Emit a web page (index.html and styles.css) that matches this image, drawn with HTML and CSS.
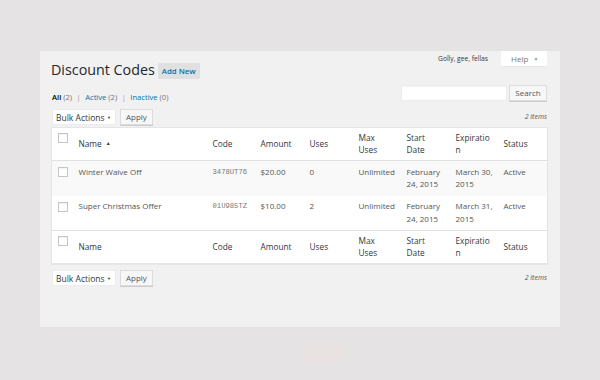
FILE: index.html
```html
<!DOCTYPE html>
<html>
<head>
<meta charset="utf-8">
<link rel="stylesheet" href="styles.css">
</head>
<body>
<div class="frame">
  <div class="top">
    <div class="title-row">
      <h1 class="title">Discount Codes</h1>
      <span class="add-new">Add New</span>
    </div>
    <div class="meta">
      <span class="golly">Golly, gee, fellas</span>
      <span class="help">Help <span class="caret">▼</span></span>
    </div>
  </div>
  <div class="filter-row">
    <div class="subsubsub">
      <span class="current">All</span> <span class="count">(2)</span> <span class="sep">|</span>
      <span class="link">Active</span> <span class="count">(2)</span> <span class="sep">|</span>
      <span class="link">Inactive</span> <span class="count">(0)</span>
    </div>
    <div class="search">
      <span class="search-input"></span>
      <span class="btn search-btn">Search</span>
    </div>
  </div>
  <div class="tablenav">
    <div class="actions">
      <span class="select">Bulk Actions <span class="sel-caret">▼</span></span>
      <span class="btn">Apply</span>
    </div>
    <span class="items">2 items</span>
  </div>
  <table class="list">
    <colgroup>
      <col class="c-cb"><col class="c-name"><col class="c-code"><col class="c-amt"><col class="c-uses"><col class="c-max"><col class="c-start"><col class="c-exp"><col class="c-status">
    </colgroup>
    <thead>
      <tr>
        <th class="cb"><span class="check"></span></th>
        <th>Name <span class="sort">▲</span></th>
        <th>Code</th>
        <th>Amount</th>
        <th>Uses</th>
        <th>Max Uses</th>
        <th>Start Date</th>
        <th>Expiration</th>
        <th>Status</th>
      </tr>
    </thead>
    <tbody>
      <tr class="alt">
        <td class="cb"><span class="check"></span></td>
        <td>Winter Waive Off</td>
        <td class="code">3478UT76</td>
        <td>$20.00</td>
        <td>0</td>
        <td>Unlimited</td>
        <td>February 24, 2015</td>
        <td>March 30, 2015</td>
        <td>Active</td>
      </tr>
      <tr>
        <td class="cb"><span class="check"></span></td>
        <td>Super Christmas Offer</td>
        <td class="code">01U985TZ</td>
        <td>$10.00</td>
        <td>2</td>
        <td>Unlimited</td>
        <td>February 24, 2015</td>
        <td>March 31, 2015</td>
        <td>Active</td>
      </tr>
    </tbody>
    <tfoot>
      <tr>
        <th class="cb"><span class="check"></span></th>
        <th>Name</th>
        <th>Code</th>
        <th>Amount</th>
        <th>Uses</th>
        <th>Max Uses</th>
        <th>Start Date</th>
        <th>Expiration</th>
        <th>Status</th>
      </tr>
    </tfoot>
  </table>
  <div class="tablenav bottom">
    <div class="actions">
      <span class="select">Bulk Actions <span class="sel-caret">▼</span></span>
      <span class="btn">Apply</span>
    </div>
    <span class="items">2 items</span>
  </div>
</div>
<div class="ghost-row"><span class="ghost"></span></div>
</body>
</html>
```

FILE: styles.css
```css
html, body {
  margin: 0;
  padding: 0;
}
body {
  background: #e5e3e3;
  font-family: "Open Sans", "Noto Sans", sans-serif;
  color: #555;
  width: 600px;
  height: 380px;
  overflow: hidden;
}
.frame {
  margin: 51px 40px 0;
  height: 276px;
  background: #f1f1f1;
  padding: 0 13px 0 11px;
  box-sizing: border-box;
}
.top {
  display: flex;
  justify-content: space-between;
  align-items: flex-start;
}
.title-row {
  display: flex;
  align-items: center;
  margin-top: 12px;
  height: 16px;
  gap: 3px;
}
.title {
  margin: 0;
  font-size: 14.3px;
  font-weight: 400;
  color: #23282d;
  line-height: 16px;
  position: relative;
  top: -1px;
}
.add-new {
  background: #e0e0e0;
  color: #0073aa;
  font-weight: 600;
  font-size: 7.8px;
  height: 16px;
  line-height: 16px;
  padding: 0 4px;
  border-radius: 1px;
}
.meta {
  display: flex;
  align-items: center;
  height: 15px;
  gap: 13px;
}
.golly {
  font-size: 6.7px;
  color: #32373c;
}
.help {
  background: #fff;
  width: 46px;
  height: 15px;
  line-height: 15px;
  font-size: 8px;
  color: #72777c;
  box-sizing: border-box;
  padding-left: 10px;
  box-shadow: 0 1px 1px rgba(0,0,0,0.04);
}
.caret {
  font-size: 5px;
  margin-left: 3px;
  vertical-align: 1px;
  color: #999;
}
.filter-row {
  display: flex;
  justify-content: space-between;
  align-items: flex-start;
  margin-top: 6px;
}
.subsubsub {
  margin-top: 6px;
  font-size: 7.6px;
  line-height: 12px;
  color: #666;
  padding-left: 1px;
}
.subsubsub .current {
  color: #000;
  font-weight: 600;
}
.subsubsub .count {
  color: #72777c;
}
.subsubsub .sep {
  color: #999;
  margin: 0 2.5px;
}
.subsubsub .link {
  color: #0073aa;
}
.search {
  display: flex;
  gap: 2px;
}
.search-input {
  width: 106px;
  height: 16px;
  background: #fff;
  box-shadow: inset 0 1px 1px rgba(0,0,0,0.05);
  border: 1px solid #ececec;
  box-sizing: border-box;
}
.btn {
  display: inline-block;
  height: 16px;
  line-height: 14px;
  font-size: 8px;
  color: #555;
  background: #f7f7f7;
  border: 1px solid #dcdcdc;
  box-sizing: border-box;
  padding: 0 5px;
  box-shadow: 0 1px 0 #ccc;
}
.search-btn {
  width: 38px;
  padding: 0;
  text-align: center;
}
.tablenav {
  display: flex;
  justify-content: space-between;
  align-items: center;
  margin-top: 6px;
  height: 16px;
}
.tablenav.bottom {
  margin-top: 6px;
}
.actions {
  display: flex;
  gap: 4px;
  padding-left: 1px;
}
.select {
  display: inline-block;
  width: 64px;
  height: 16px;
  line-height: 15px;
  background: #fff;
  border: 1px solid #ececec;
  box-sizing: border-box;
  font-size: 8.5px;
  color: #32373c;
  padding-left: 3px;
  position: relative;
}
.sel-caret {
  font-size: 4px;
  position: absolute;
  right: 4px;
  top: 0;
  color: #333;
}
.items {
  font-size: 7px;
  font-style: italic;
  color: #555;
  position: relative;
  top: -1px;
}
.list {
  margin-top: 2px;
  width: 496px;
  table-layout: fixed;
  border-collapse: collapse;
  background: #fff;
  border: 1px solid #e5e5e5;
  box-shadow: 0 1px 1px rgba(0,0,0,0.04);
}
.c-cb { width: 21px; }
.c-name { width: 134px; }
.c-code { width: 48px; }
.c-amt { width: 49px; }
.c-uses { width: 49px; }
.c-max { width: 48px; }
.c-start { width: 49px; }
.c-exp { width: 48px; }
.c-status { width: 50px; }
th, td {
  text-align: left;
  font-size: 8px;
  line-height: 12.5px;
  padding: 0 3px 0 6px;
  overflow-wrap: anywhere;
  box-sizing: border-box;
}
th {
  font-weight: 400;
  font-size: 8.3px;
  color: #32373c;
  height: 33px;
  vertical-align: middle;
  padding-right: 7px;
}
thead tr {
  border-bottom: 1px solid #e1e1e1;
}
tfoot tr {
  border-top: 1px solid #e1e1e1;
}
td {
  height: 35px;
  vertical-align: top;
  padding-top: 4.5px;
}
tr.alt td {
  background: #f9f9f9;
}
th.cb, td.cb {
  padding: 0 0 0 6px;
}
th.cb {
  vertical-align: top;
  padding-top: 5px;
}
td.cb {
  padding-top: 6px;
}
.check {
  display: block;
  width: 10px;
  height: 10px;
  border: 1px solid #c5c5c5;
  background: #fff;
  box-sizing: border-box;
  box-shadow: inset 0 1px 1px rgba(0,0,0,0.06);
}
td.code {
  font-family: "Liberation Mono", "DejaVu Sans Mono", monospace;
  font-size: 7.2px;
  color: #777;
}
.sort {
  font-size: 5px;
  vertical-align: 2px;
  margin-left: 2px;
}
.ghost-row {
  display: flex;
  justify-content: center;
  padding-top: 16px;
  padding-left: 50px;
}
.ghost {
  width: 38px;
  height: 20px;
  background: #e8e2e2;
  border-radius: 3px;
}
```
